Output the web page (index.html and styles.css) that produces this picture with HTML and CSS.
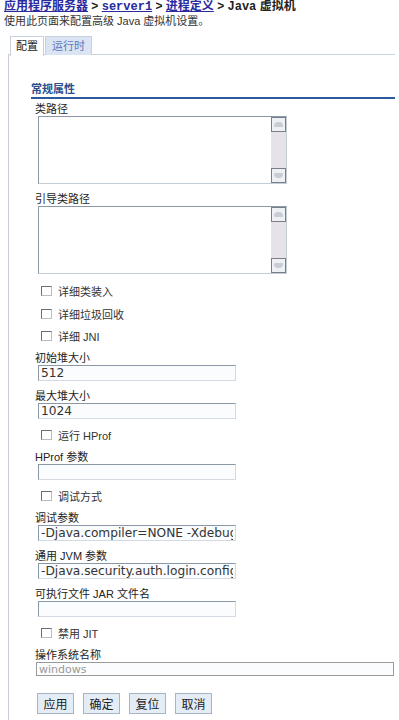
FILE: index.html
```html
<!DOCTYPE html>
<html lang="zh-CN">
<head>
    <meta charset="UTF-8">
    <title>Java 虚拟机</title>
    <link rel="stylesheet" href="styles.css">
</head>
<body>
    <div class="crumbs">
        <a href="#">应用程序服务器</a> &gt; <a href="#" class="mono">server1</a> &gt; <a href="#">进程定义</a> &gt; <span class="mono">Java</span> 虚拟机
    </div>
    <div class="desc">使用此页面来配置高级 Java 虚拟机设置。</div>

    <!-- Tabs -->
    <div class="tabs">
        <span class="tab active">配置</span>
        <span class="tab">运行时</span>
    </div>

    <div class="panel">
        <div class="group-title">常规属性</div>

        <div class="fields">
            <label class="lbl first">类路径</label>
            <div class="area">
                <textarea></textarea>
                <div class="scroll"><span class="arrow up"></span><span class="arrow down"></span></div>
            </div>

            <label class="lbl">引导类路径</label>
            <div class="area">
                <textarea></textarea>
                <div class="scroll"><span class="arrow up"></span><span class="arrow down"></span></div>
            </div>

            <label class="check"><input type="checkbox"> 详细类装入</label>
            <label class="check"><input type="checkbox"> 详细垃圾回收</label>
            <label class="check"><input type="checkbox"> 详细 JNI</label>

            <label class="lbl">初始堆大小</label>
            <input type="text" class="txt" value="512">

            <label class="lbl">最大堆大小</label>
            <input type="text" class="txt" value="1024">

            <label class="check"><input type="checkbox"> 运行 HProf</label>

            <label class="lbl">HProf 参数</label>
            <input type="text" class="txt">

            <label class="check"><input type="checkbox"> 调试方式</label>

            <label class="lbl">调试参数</label>
            <input type="text" class="txt" value="-Djava.compiler=NONE -Xdebug -Xnoagent -Xrunjdwp">

            <label class="lbl">通用 JVM 参数</label>
            <input type="text" class="txt" value="-Djava.security.auth.login.config=${USER_INSTALL_ROOT}">

            <label class="lbl">可执行文件 JAR 文件名</label>
            <input type="text" class="txt">

            <label class="check"><input type="checkbox"> 禁用 JIT</label>

            <label class="lbl">操作系统名称</label>
            <input type="text" class="txt wide" value="windows">

            <div class="buttons">
                <button>应用</button>
                <button>确定</button>
                <button>复位</button>
                <button>取消</button>
            </div>
        </div>
    </div>
</body>
</html>
```

FILE: styles.css
```css
body {
    margin: 0;
    padding: 0 4px;
    font-family: "Liberation Sans", "Noto Sans CJK SC", sans-serif;
    font-size: 11px;
    color: #222;
    background: #fff;
}
.crumbs {
    height: 13px;
    font-size: 12px;
    font-weight: bold;
    line-height: 13px;
    white-space: nowrap;
    color: #222;
}
.crumbs a {
    color: #2a2aa0;
}
.mono {
    font-family: "Liberation Mono", "Noto Sans CJK SC", monospace;
}
.desc {
    margin-top: 2px;
    height: 13px;
    line-height: 13px;
    color: #333;
}
.tabs {
    display: flex;
    height: 19px;
    margin-top: 8px;
    padding-left: 6px;
    gap: 1px;
    position: relative;
    z-index: 1;
    margin-bottom: -1px;
}
.tab {
    padding: 0 6px;
    line-height: 18px;
    border: 1px solid #c8d0dc;
    border-bottom: none;
    color: #5a78c0;
    background: #dae4f2;
}
.tab.active {
    padding: 0 5px;
    color: #222;
    background: #fff;
    height: 19px;
}
.panel {
    margin-left: 4px;
    border-left: 1px solid #c8ccd4;
    border-top: 1px solid #c8d4e0;
    padding: 28px 0 20px 22px;
}
.group-title {
    height: 13px;
    font-weight: bold;
    font-size: 11px;
    color: #2c4f8c;
    line-height: 13px;
    border-bottom: 2px solid #2a5a9a;
    padding-bottom: 1px;
}
.fields {
    display: flex;
    flex-direction: column;
    align-items: flex-start;
    padding-left: 4px;
}
.lbl {
    height: 12px;
    line-height: 12px;
    margin-top: 9px;
    margin-bottom: 1px;
}
.lbl.first {
    margin-top: 4px;
}
.check + .lbl {
    margin-top: 6px;
}
.area {
    display: flex;
    width: 249px;
    height: 68px;
    margin-left: 3px;
    box-sizing: border-box;
    border: 1px solid #8a98a8;
    border-right-color: #c4ccd6;
    border-bottom-color: #c4ccd6;
}
.area textarea {
    flex: 1;
    border: none;
    padding: 0;
    margin: 0;
    resize: none;
    outline: none;
}
.scroll {
    display: flex;
    flex-direction: column;
    justify-content: space-between;
    width: 15px;
    background: #e6e2ea;
}
.arrow {
    height: 15px;
    box-sizing: border-box;
    border: 1px solid #7a7e88;
    background: #eef0f4;
    position: relative;
}
.arrow::after {
    content: "";
    position: absolute;
    left: 2px;
    right: 2px;
    top: 4px;
    height: 5px;
    border-radius: 4px 4px 1px 1px;
    background: #c8cdd6;
}
.arrow.down::after {
    border-radius: 1px 1px 4px 4px;
}
.check {
    display: flex;
    align-items: center;
    gap: 6px;
    height: 20px;
    padding-left: 6px;
    margin-top: 6px;
    color: #333;
}
.check + .check {
    margin-top: 2.5px;
}
.area + .check {
    margin-top: 7px;
}
.check input {
    appearance: none;
    width: 11px;
    height: 10px;
    margin: 0;
    border: 1px solid #b8bcc4;
    border-top-color: #6a6e76;
    border-left-color: #6a6e76;
    background: #fff;
}
.txt {
    width: 198px;
    height: 16px;
    margin: 0 0 0 3px;
    padding: 0 2px;
    box-sizing: border-box;
    border: 1px solid #8a98a8;
    border-right-color: #d4dae2;
    border-bottom-color: #d4dae2;
    font-family: "DejaVu Sans", sans-serif;
    font-size: 12.2px;
    color: #333;
    background: #fbfcfd;
}
.txt.wide {
    width: 358px;
    height: 14px;
    margin-left: 1px;
    font-size: 11px;
    color: #999;
    border: 1px solid #9a9a9a;
}
.buttons {
    display: flex;
    gap: 9px;
    margin-top: 17px;
    margin-left: 2px;
}
.buttons button {
    width: 37px;
    height: 21px;
    padding: 0;
    font-family: "Noto Sans CJK SC", sans-serif;
    font-size: 12px;
    color: #222;
    background: #e4ecf6;
    border: 1px solid #a8b4c4;
}
```
